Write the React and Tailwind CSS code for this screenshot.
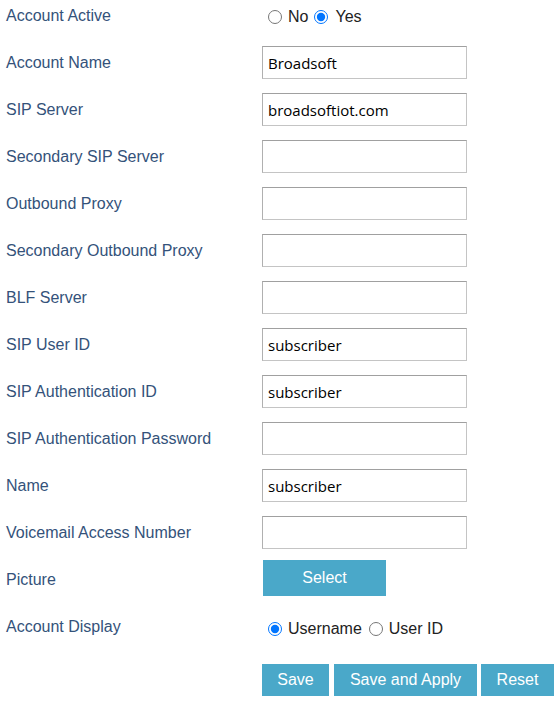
import React from 'react';

const fields = [
  { label: 'Account Name', value: 'Broadsoft' },
  { label: 'SIP Server', value: 'broadsoftiot.com' },
  { label: 'Secondary SIP Server', value: '' },
  { label: 'Outbound Proxy', value: '' },
  { label: 'Secondary Outbound Proxy', value: '' },
  { label: 'BLF Server', value: '' },
  { label: 'SIP User ID', value: 'subscriber' },
  { label: 'SIP Authentication ID', value: 'subscriber' },
  { label: 'SIP Authentication Password', value: '' },
  { label: 'Name', value: 'subscriber' },
  { label: 'Voicemail Access Number', value: '' },
];

function Row({ label, children }) {
  return (
    <div className="flex items-center h-[33px] mb-[14px]">
      <div className="w-[262px] pl-[6px] text-[16px] text-[#34527a]">{label}</div>
      <div className="flex items-center">{children}</div>
    </div>
  );
}

function Btn({ children, className }) {
  return (
    <button className={'bg-[#4aa8c9] text-white text-[16px] ' + className}>{children}</button>
  );
}

export default function App() {
  return (
    <div className="bg-white min-h-screen font-['Liberation_Sans',Arial,sans-serif] -mt-px">
      <Row label="Account Active">
        <label className="flex items-center text-[16px] text-[#222] mt-[3px]">
          <input type="radio" name="active" className="m-0 ml-[6px] mr-[6px] w-[14px] h-[14px]" />
          No
          <input type="radio" name="active" defaultChecked className="m-0 ml-[6px] mr-[7px] w-[14px] h-[14px]" />
          Yes
        </label>
      </Row>
      {fields.map((f) => (
        <Row key={f.label} label={f.label}>
          <input
            type="text"
            defaultValue={f.value}
            className="w-[205px] h-[33px] border border-[#c4c4c4] border-t-[#a0a0a0] border-l-[#b0b0b0] px-[5px] text-[15px] text-black font-['Open_Sans',sans-serif] outline-none"
          />
        </Row>
      ))}
      <Row label="Picture">
        <Btn className="w-[123px] h-[36px] ml-px -mt-[3px]">Select</Btn>
      </Row>
      <Row label="Account Display">
        <label className="flex items-center text-[16px] text-[#222] mt-[4px]">
          <input type="radio" name="disp" defaultChecked className="m-0 ml-[6px] mr-[6px] w-[14px] h-[14px]" />
          Username
          <input type="radio" name="disp" className="m-0 ml-[7px] mr-[6px] w-[14px] h-[14px]" />
          User ID
        </label>
      </Row>
      <div className="flex pl-[262px] gap-[5px] mt-[21px]">
        <Btn className="w-[67px] h-[32px]">Save</Btn>
        <Btn className="w-[143px] h-[32px]">Save and Apply</Btn>
        <Btn className="w-[73px] h-[32px] -ml-px">Reset</Btn>
      </div>
    </div>
  );
}
